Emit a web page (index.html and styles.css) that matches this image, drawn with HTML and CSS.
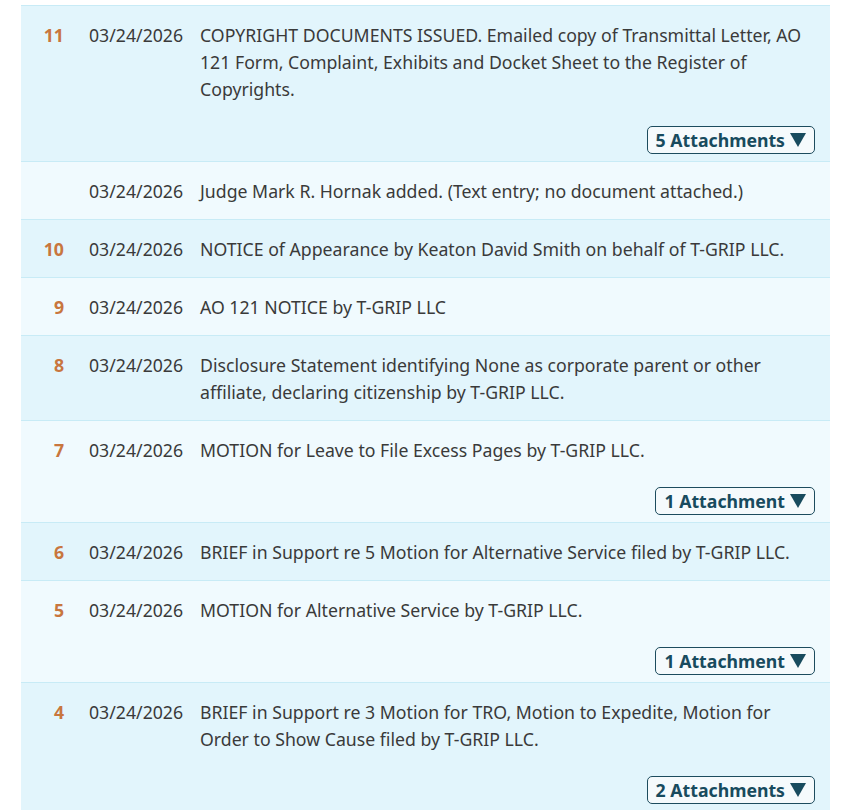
FILE: index.html
```html
<!DOCTYPE html>
<html>
<head>
<meta charset="utf-8">
<link rel="stylesheet" href="styles.css">
</head>
<body>
<div class="docket">
  <div class="row odd has-att">
    <div class="num">11</div>
    <div class="date">03/24/2026</div>
    <div class="text">COPYRIGHT DOCUMENTS ISSUED. Emailed copy of Transmittal Letter, AO 121 Form, Complaint, Exhibits and Docket Sheet to the Register of Copyrights.</div>
    <div class="att"><button class="att-btn">5 Attachments <svg class="tri" viewBox="0 0 16 14" width="16" height="14"><path d="M0 0H16L8 14Z"/></svg></button></div>
  </div>
  <div class="row even">
    <div class="num"></div>
    <div class="date">03/24/2026</div>
    <div class="text">Judge Mark R. Hornak added. (Text entry; no document attached.)</div>
  </div>
  <div class="row odd">
    <div class="num">10</div>
    <div class="date">03/24/2026</div>
    <div class="text">NOTICE of Appearance by Keaton David Smith on behalf of T-GRIP LLC.</div>
  </div>
  <div class="row even">
    <div class="num">9</div>
    <div class="date">03/24/2026</div>
    <div class="text">AO 121 NOTICE by T-GRIP LLC</div>
  </div>
  <div class="row odd">
    <div class="num">8</div>
    <div class="date">03/24/2026</div>
    <div class="text">Disclosure Statement identifying None as corporate parent or other affiliate, declaring citizenship by T-GRIP LLC.</div>
  </div>
  <div class="row even has-att">
    <div class="num">7</div>
    <div class="date">03/24/2026</div>
    <div class="text">MOTION for Leave to File Excess Pages by T-GRIP LLC.</div>
    <div class="att"><button class="att-btn">1 Attachment <svg class="tri" viewBox="0 0 16 14" width="16" height="14"><path d="M0 0H16L8 14Z"/></svg></button></div>
  </div>
  <div class="row odd">
    <div class="num">6</div>
    <div class="date">03/24/2026</div>
    <div class="text">BRIEF in Support re 5 Motion for Alternative Service filed by T-GRIP LLC.</div>
  </div>
  <div class="row even has-att">
    <div class="num">5</div>
    <div class="date">03/24/2026</div>
    <div class="text">MOTION for Alternative Service by T-GRIP LLC.</div>
    <div class="att"><button class="att-btn">1 Attachment <svg class="tri" viewBox="0 0 16 14" width="16" height="14"><path d="M0 0H16L8 14Z"/></svg></button></div>
  </div>
  <div class="row odd has-att">
    <div class="num">4</div>
    <div class="date">03/24/2026</div>
    <div class="text">BRIEF in Support re 3 Motion for TRO, Motion to Expedite, Motion for Order to Show Cause filed by T-GRIP LLC.</div>
    <div class="att"><button class="att-btn">2 Attachments <svg class="tri" viewBox="0 0 16 14" width="16" height="14"><path d="M0 0H16L8 14Z"/></svg></button></div>
  </div>
</div>
</body>
</html>
```
FILE: styles.css
```css
html, body {
  margin: 0;
  padding: 0;
  background: #ffffff;
}
body {
  font-family: "Noto Sans", "Liberation Sans", sans-serif;
  color: #3a3a3a;
  font-size: 17.7px;
}
.docket {
  margin: 5px 0 0 21px;
  width: 809px;
  border-top: 1px solid #c8ebf6;
}
.row {
  display: grid;
  grid-template-columns: 68px 111px 1fr;
  padding: 16px 15px 14px 0;
  line-height: 27px;
  border-bottom: 1px solid #c8ebf6;
}
.row.odd { background: #e2f5fc; }
.row.even { background: #f0fafe; }
.row.has-att { padding-bottom: 7px; }
.num {
  text-align: right;
  padding-right: 25px;
  font-weight: bold;
  color: #c8763e;
}
.att {
  grid-column: 1 / 4;
  display: flex;
  justify-content: flex-end;
  margin-top: 23px;
}
.att-btn {
  display: inline-flex;
  align-items: center;
  gap: 5px;
  font-family: inherit;
  font-size: 17.7px;
  font-weight: bold;
  color: #184b5e;
  background: #f5fafc;
  border: 1px solid #1d4c5e;
  border-radius: 5px;
  height: 28px;
  line-height: 26px;
  padding: 0 8px;
}
.tri {
  fill: #184b5e;
  display: block;
}
```
